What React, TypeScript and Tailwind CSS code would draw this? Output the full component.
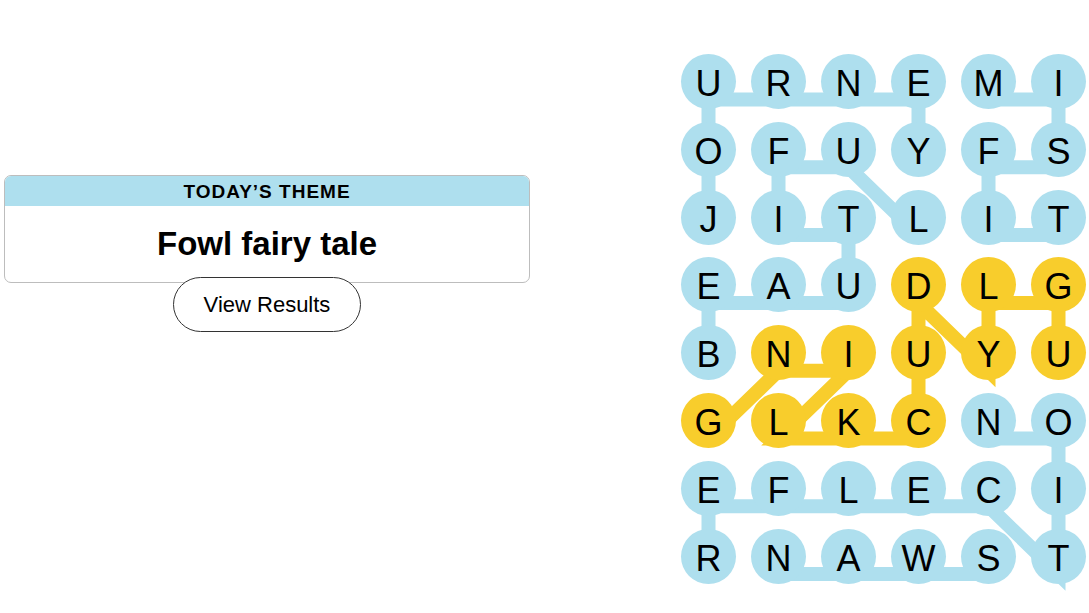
import React from 'react';

const BLUE = '#aedfee';
const YELLOW = '#f8cd2c';

const ROWS = ['URNEMI', 'OFUYFS', 'JITLIT', 'EAUDLG', 'BNIUYU', 'GLKCNO', 'EFLECI', 'RNAWST'];

const COL_PITCH = 70;
const ROW_PITCH = 67.8;
const SIZE = 55;
const LINE_DROP = 18;

type Cell = [number, number];

const WORDS: { color: string; cells: Cell[] }[] = [
    { color: BLUE, cells: [[2, 0], [1, 0], [0, 0], [0, 1], [0, 2], [0, 3], [1, 3]] },
    { color: BLUE, cells: [[0, 4], [0, 5], [1, 5], [1, 4], [2, 4], [2, 5]] },
    { color: BLUE, cells: [[4, 0], [3, 0], [3, 1], [3, 2], [2, 2], [2, 1], [1, 1], [1, 2], [2, 3]] },
    { color: BLUE, cells: [[7, 0], [6, 0], [6, 1], [6, 2], [6, 3], [6, 4], [7, 5], [6, 5], [5, 5], [5, 4]] },
    { color: BLUE, cells: [[7, 4], [7, 3], [7, 2], [7, 1]] },
    {
        color: YELLOW,
        cells: [[4, 5], [3, 5], [3, 4], [4, 4], [3, 3], [4, 3], [5, 3], [5, 2], [5, 1], [4, 2], [4, 1], [5, 0]],
    },
];

const spangram = new Set(WORDS[5].cells.map(([r, c]) => `${r}-${c}`));

const point = ([r, c]: Cell) => `${SIZE / 2 + c * COL_PITCH},${SIZE / 2 + r * ROW_PITCH + LINE_DROP}`;

const Board = () => {
    return (
        <div className="relative">
            <svg
                className="absolute left-0 top-0 overflow-visible"
                width={SIZE + 5 * COL_PITCH}
                height={SIZE + 7 * ROW_PITCH}
            >
                {WORDS.map((w, i) => (
                    <polyline
                        key={i}
                        points={w.cells.map(point).join(' ')}
                        fill="none"
                        stroke={w.color}
                        strokeWidth={14}
                        strokeLinejoin="miter"
                        strokeMiterlimit={4}
                    />
                ))}
            </svg>
            <div className="relative grid grid-cols-[repeat(6,55px)] gap-x-[15px] gap-y-[12.8px]">
                {ROWS.map((row, r) =>
                    row.split('').map((letter, c) => (
                        <div
                            key={`${r}-${c}`}
                            className={`flex h-[55px] w-[55px] items-center justify-center rounded-full pt-[5px] font-['Liberation_Sans',sans-serif] text-[36px] leading-none text-black ${
                                spangram.has(`${r}-${c}`) ? 'bg-[#f8cd2c]' : 'bg-[#aedfee]'
                            }`}
                        >
                            {letter}
                        </div>
                    ))
                )}
            </div>
        </div>
    );
};

export default function App() {
    return (
        <div className="flex h-[613px] w-[1089px] bg-white font-['Liberation_Sans',sans-serif] text-black">
            <div className="w-[534px] pl-[4px] pt-[175px]">
                <div className="flex w-[526px] flex-col items-center">
                    <div className="w-full overflow-hidden rounded-[7px] border border-[#bdbdbd]">
                        <div className="flex h-[30px] items-center justify-center bg-[#aedfee] pt-[3px] text-[19px] font-bold uppercase tracking-[1px]">
                            Today’s Theme
                        </div>
                        <div className="flex h-[76px] items-center justify-center text-[33px] font-bold">
                            Fowl fairy tale
                        </div>
                    </div>
                    <button
                        type="button"
                        className="relative -mt-[6px] h-[55px] w-[188px] rounded-full border border-[#333] bg-white text-[22px]"
                    >
                        View Results
                    </button>
                </div>
            </div>
            <div className="ml-[147px] pt-[54px]">
                <Board />
            </div>
        </div>
    );
}
